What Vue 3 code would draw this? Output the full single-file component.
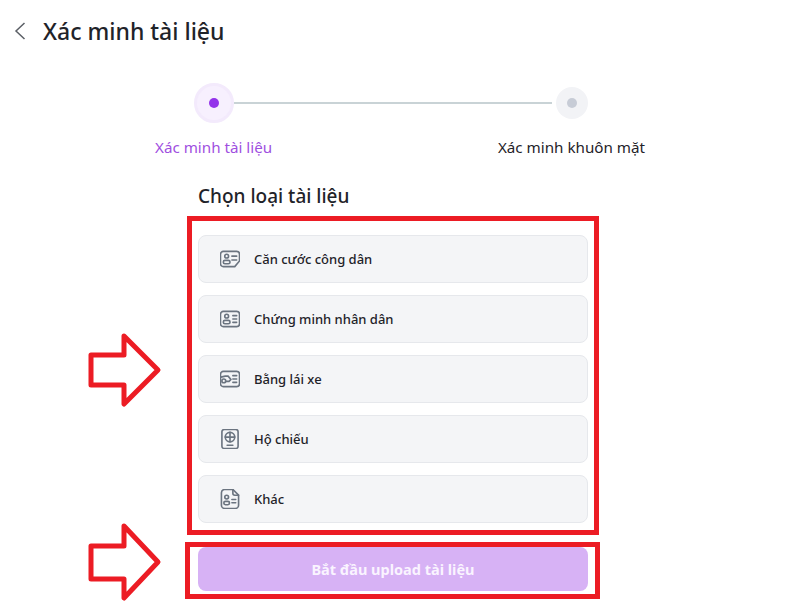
<script setup>
const loaiTaiLieu = [
  { ten: 'Căn cước công dân', icon: 'cccd' },
  { ten: 'Chứng minh nhân dân', icon: 'cmnd' },
  { ten: 'Bằng lái xe', icon: 'banglai' },
  { ten: 'Hộ chiếu', icon: 'hochieu' },
  { ten: 'Khác', icon: 'khac' },
]
</script>

<template>
  <div class="page">
    <header class="top">
      <svg class="back" width="12" height="18" viewBox="0 0 12 18" fill="none">
        <path d="M10.5 1 2 9l8.500 8" stroke="#5b5f66" stroke-width="1.500" />
      </svg>
      <h1>Xác minh tài liệu</h1>
    </header>

    <div class="stepper">
      <div class="step-row">
        <span class="dot active"><i></i></span>
        <span class="line"></span>
        <span class="dot last"><i></i></span>
      </div>
      <div class="step-labels">
        <span class="active-label">Xác minh tài liệu</span>
        <span>Xác minh khuôn mặt</span>
      </div>
    </div>

    <main class="content">
      <h2>Chọn loại tài liệu</h2>
      <ul class="list">
        <li v-for="loai in loaiTaiLieu" :key="loai.ten" class="item">
          <svg width="20" height="20" viewBox="0.5 0.5 21 21" fill="none" stroke="#6b7480" stroke-width="1.700" stroke-linecap="round" stroke-linejoin="round">
            <template v-if="loai.icon === 'cccd'">
              <path d="M4 3h14a3 3 0 0 1 3 3v7l-5 6H4a3 3 0 0 1-3-3V6a3 3 0 0 1 3-3Z" />
              <circle cx="7.500" cy="8" r="2" />
              <rect x="4" y="12.500" width="7" height="3.500" rx="1.700" />
              <path d="M13 8h5M13 12h5" />
            </template>
            <template v-else-if="loai.icon === 'cmnd'">
              <rect x="1" y="3" width="20" height="16" rx="3" />
              <circle cx="7.500" cy="8" r="2" />
              <rect x="4" y="12.500" width="7" height="3.500" rx="1.700" />
              <path d="M14 7.500h4M14 11h4M14 14.500h4" />
            </template>
            <template v-else-if="loai.icon === 'banglai'">
              <rect x="1" y="3" width="20" height="16" rx="3" />
              <path d="M1.500 9 6 8h3l3 3.500-2 2H7" />
              <circle cx="4.500" cy="13" r="2" />
              <path d="M14 7.500h4M14 11h4M14 14.500h4" />
            </template>
            <template v-else-if="loai.icon === 'hochieu'">
              <rect x="2.500" y="1" width="17" height="20" rx="2.500" />
              <circle cx="11" cy="9" r="5" />
              <path d="M6 9h10M11 4v10M8 17.500h6" />
            </template>
            <template v-else>
              <path d="M5 1h9l6 6v10.500a3.500 3.500 0 0 1-3.500 3.500h-11A3.500 3.500 0 0 1 2 17.500v-13A3.500 3.500 0 0 1 5 1Z" />
              <path d="M14 1v4a2 2 0 0 0 2 2h4" />
              <circle cx="7.500" cy="9" r="2" />
              <rect x="4.500" y="13.500" width="6" height="3.500" rx="1.700" />
              <path d="M13 11.500h4M13 15h4" />
            </template>
          </svg>
          <span>{{ loai.ten }}</span>
        </li>
      </ul>
      <button type="button" class="start">Bắt đầu upload tài liệu</button>
    </main>

    <div class="mark mark-list"></div>
    <div class="mark mark-button"></div>
    <svg class="arrow arrow-list" width="76" height="76" viewBox="0 0 76 76" fill="none">
      <path d="M3 23h33V4l34 34-34 34V53H3Z" stroke="#ec1c24" stroke-width="5" stroke-linejoin="round" />
    </svg>
    <svg class="arrow arrow-button" width="76" height="80" viewBox="0 0 76 80" fill="none">
      <path d="M3 23h33V3l34 36-34 36V56H3Z" stroke="#ec1c24" stroke-width="5" stroke-linejoin="round" />
    </svg>
  </div>
</template>

<style scoped>
.page {
  position: relative;
  width: 786px;
  height: 612px;
  overflow: hidden;
  background: #fff;
  color: #1f2329;
  font-family: 'Noto Sans', 'Open Sans', sans-serif;
}

.top {
  display: flex;
  align-items: center;
  gap: 17px;
  padding: 16px 0 0 14px;
  height: 30px;
}

.back {
  flex: none;
}

h1 {
  margin: 0;
  font-size: 23px;
  line-height: 30px;
  font-weight: 500;
}

.stepper {
  margin-top: 37px;
  padding-left: 155px;
}

.step-row {
  display: flex;
  align-items: center;
  padding-left: 39px;
}

.dot {
  display: flex;
  align-items: center;
  justify-content: center;
  width: 32px;
  height: 32px;
  border-radius: 50%;
  background: #f2f3f6;
}

.dot.last {
  margin-left: 4px;
}

.dot i {
  width: 10px;
  height: 10px;
  border-radius: 50%;
  background: #c7ccd6;
}

.dot.active {
  width: 40px;
  height: 40px;
  box-sizing: border-box;
  background: #f7f0fe;
  border: 3px solid #f3eafc;
}

.dot.active i {
  background: #9333ea;
}

.line {
  width: 318px;
  height: 2px;
  background: #c9d3d6;
}

.step-labels {
  display: flex;
  justify-content: space-between;
  width: 490px;
  margin-top: 13px;
  font-size: 15.200px;
  line-height: 22px;
}

.active-label {
  color: #9f4fdf;
}

.content {
  width: 390px;
  margin: 25px 0 0 198px;
}

h2 {
  margin: 0;
  font-size: 19px;
  line-height: 26px;
  font-weight: 500;
}

.list {
  display: flex;
  flex-direction: column;
  gap: 12px;
  margin: 26px 0 0;
  padding: 0;
  list-style: none;
}

.item {
  display: flex;
  align-items: center;
  gap: 14px;
  height: 48px;
  box-sizing: border-box;
  padding-left: 21px;
  border: 1px solid #e6e8ec;
  border-radius: 8px;
  background: #f4f5f7;
  font-size: 13px;
  font-weight: 500;
}

.start {
  display: block;
  width: 100%;
  height: 44px;
  margin-top: 24px;
  border: 0;
  border-radius: 8px;
  background: #d7b2f5;
  color: #faf4ff;
  font: inherit;
  font-size: 14.500px;
  font-weight: 700;
}

.mark {
  position: absolute;
  box-sizing: border-box;
  border: 5px solid #ec1c24;
}

.mark-list {
  left: 187px;
  top: 216px;
  width: 412px;
  height: 319px;
}

.mark-button {
  left: 185px;
  top: 542px;
  width: 415px;
  height: 57px;
}

.arrow {
  position: absolute;
  left: 88px;
}

.arrow-list {
  top: 332px;
}

.arrow-button {
  top: 523px;
}
</style>
